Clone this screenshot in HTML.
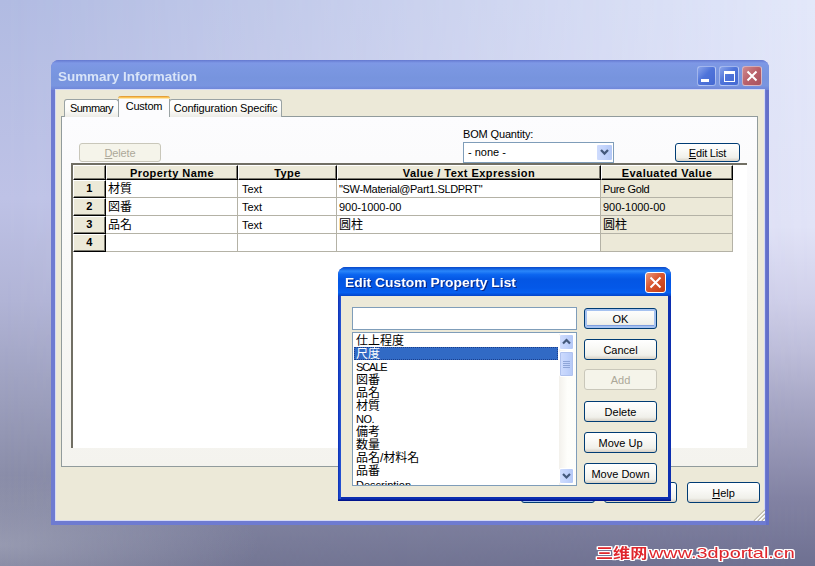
<!DOCTYPE html>
<html lang="ja">
<head>
<meta charset="utf-8">
<title>Summary Information</title>
<style>
html,body{margin:0;padding:0;}
body{width:815px;height:566px;overflow:hidden;position:relative;
  font-family:"Liberation Sans","Noto Sans CJK JP",sans-serif;font-size:11px;color:#000;
  background:#b9bcdc;}
.abs{position:absolute;}
#bg,#bg2,#bg3{left:0;top:0;width:815px;height:566px;}
#bg{background:linear-gradient(to bottom, rgb(177,187,226) 0%, rgb(190,194,230) 35%, rgb(177,180,214) 53%, rgb(155,158,188) 71%, rgb(133,136,163) 88%, rgb(118,121,149) 100%);}
#bg2{background:linear-gradient(to bottom, rgb(227,232,250) 0%, rgb(225,227,247) 40%, rgb(208,208,234) 53%, rgb(190,190,218) 62%, rgb(168,168,198) 71%, rgb(130,130,163) 88%, rgb(110,112,145) 100%);
  -webkit-mask-image:linear-gradient(to right, rgba(0,0,0,0) 0%, rgba(0,0,0,1) 100%);mask-image:linear-gradient(to right, rgba(0,0,0,0) 0%, rgba(0,0,0,1) 100%);}
#bg3{background:radial-gradient(ellipse 260px 70px at 0px 545px, rgba(185,188,205,0.45) 0%, rgba(185,188,205,0) 100%);}
/* main window */
#win{left:51px;top:60px;width:717.6px;height:464.5px;border-radius:8px 8px 0 0;background:#6e7bd1;overflow:hidden;}
#win .title{left:0;top:0;width:718px;height:30px;
  background:linear-gradient(to bottom,#6478d0 0%,#7e98e6 10%,#7b97e2 25%,#7794de 60%,#7995e0 85%,#6e84d8 100%);}
#win .ttext{left:7px;top:10px;font-weight:bold;font-size:12px;line-height:14px;color:#d8e4f8;white-space:nowrap;transform:scaleX(1.12);transform-origin:left center;}
#win .client{left:5px;top:30px;width:708px;height:430px;background:#ece9d8;box-shadow:0 0 0 1px #d4d9f6;}
.cap{top:6px;width:19.8px;height:20px;border:1px solid rgba(235,240,255,0.55);border-radius:3px;box-sizing:border-box;}
.capb{background:linear-gradient(135deg,#8aa4ea 0%,#4f74da 45%,#4468d2 100%);}
.capr{background:linear-gradient(135deg,#cf8a8e 0%,#b9606a 50%,#a9525e 100%);}
/* tabs */
.tab{box-sizing:border-box;border:1px solid #9aa3a4;border-bottom:none;border-radius:3px 3px 0 0;
  background:linear-gradient(to bottom,#ffffff 0%,#fbfbf8 60%,#ecebe6 100%);text-align:center;white-space:nowrap;}
.tabsel{background:#fcfcfe;border-top:none;}
.tabsel:before{content:"";position:absolute;left:-1px;top:0;right:-1px;height:3px;border-radius:3px 3px 0 0;
  background:linear-gradient(to bottom,#e5a03a 0%,#e5a03a 33%,#fbc457 34%,#fbc457 66%,#fde6ae 67%,#fde6ae 100%);}
#panel{left:61px;top:116px;width:697px;height:351px;box-sizing:border-box;border:1px solid #919b9c;
  background:linear-gradient(to bottom,#fcfcfe 0%,#f8f8f6 50%,#f4f3ee 100%);}
/* xp buttons */
.btn{box-sizing:border-box;border:1px solid #003c74;border-radius:3px;text-align:center;white-space:nowrap;
  background:linear-gradient(to bottom,#ffffff 0%,#f9f9f6 40%,#f0f0ea 80%,#d6d0c5 100%);line-height:20px;}
.btn.dis{border-color:#c9c7ba;color:#aca899;background:#f5f4ea;}
.btn.def{box-shadow:inset 0 0 0 2px #a6c2f0, inset 0 -1px 0 2px #7f9fe0;}
u{text-decoration:underline;}
/* grid */
#grid{left:71px;top:163px;width:676px;height:285px;background:#fff;box-sizing:border-box;
  border-left:2px solid #716f64;border-top:2px solid #716f64;}
.hd{box-sizing:border-box;background:#ece9d8;border-right:1px solid #000;border-bottom:1px solid #000;
  border-left:1px solid #fff;border-top:1px solid #fff;box-shadow:inset -1px -1px 0 #7d7b70;font-weight:bold;font-size:11px;letter-spacing:0.45px;text-align:center;white-space:nowrap;line-height:14px;}
.cell{box-sizing:border-box;border-right:1px solid #b4b2a6;border-bottom:1px solid #b4b2a6;white-space:nowrap;line-height:18px;padding-left:2px;}
.ev{background:#ece9d8;}
.jp{font-size:12px;font-family:"Liberation Sans","Noto Sans CJK JP",sans-serif;}
/* edit dialog */
#dlg{left:338px;top:267px;width:333px;height:234px;border-radius:8px 8px 0 0;background:linear-gradient(to bottom,#0c2eb0 0%,#0c2eb0 99.2%,#00138c 99.6%,#00138c 100%);overflow:hidden;}
#dlg .title{left:0;top:0;width:333px;height:29px;
  background:linear-gradient(to bottom,#0a48c8 0%,#1060e0 6%,#2a86fa 14%,#0c66f0 26%,#0456e4 42%,#0458e8 72%,#0660f0 88%,#0444c8 100%);}
#dlg .ttext{left:7px;top:9px;font-weight:bold;font-size:12px;line-height:14px;color:#fff;white-space:nowrap;text-shadow:1px 1px 0 #0a2a8c;transform:scaleX(1.155);transform-origin:left center;}
#dlg .client{left:3px;top:29px;width:327px;height:201px;background:#ece9d8;}
.inp{box-sizing:border-box;border:1px solid #7f9db9;background:#fff;}
.li{left:1px;width:204px;height:13px;line-height:13px;white-space:nowrap;font-size:12px;padding-left:2px;box-sizing:border-box;}
.li.en{font-size:11px;}
.sbtn{box-sizing:border-box;border:1px solid #fff;border-radius:2px;background:linear-gradient(to right,#cfdcfd 0%,#c2d3fc 50%,#b4c8f6 100%);}
.wm{height:20px;line-height:20px;white-space:nowrap;color:#e0262c;transform-origin:left center;
  font-family:"Liberation Sans","Noto Sans CJK SC",sans-serif;
  text-shadow:-1px -1px 0 #fff,1px -1px 0 #fff,-1px 1px 0 #fff,1px 1px 0 #fff,0 -1px 0 #fff,0 1px 0 #fff,-1px 0 0 #fff,1px 0 0 #fff;}
</style>
</head>
<body>
<div id="bg" class="abs"></div><div id="bg2" class="abs"></div><div id="bg3" class="abs"></div>

<div id="win" class="abs">
  <div class="title abs"></div>
  <div class="ttext abs">Summary Information</div>
  <div class="cap capb abs" style="left:645.5px"><div class="abs" style="left:3.5px;top:12px;width:8px;height:3px;background:#fff"></div></div>
  <div class="cap capb abs" style="left:668.2px"><div class="abs" style="left:3.5px;top:4px;width:11px;height:11px;box-sizing:border-box;border:1px solid #fff;border-top-width:3px"></div></div>
  <div class="cap capr abs" style="left:691.2px">
    <svg class="abs" style="left:0;top:0" width="18" height="18" viewBox="0 0 18 18"><path d="M4.5 4.5 L13.5 13.5 M13.5 4.5 L4.5 13.5" stroke="#fff" stroke-width="2" fill="none"/></svg>
  </div>
  <div class="abs" style="right:0;top:30px;width:3px;height:435px;background:#6470c9;"></div>
  <div class="client abs"></div>
</div>

<!-- tabs -->
<div id="panel" class="abs"></div>
<div class="tab abs" style="left:64px;top:99px;width:55px;height:18px;line-height:17px;letter-spacing:-0.6px;">Summary</div>
<div class="tab abs" style="left:169px;top:99px;width:113px;height:18px;line-height:17px;letter-spacing:-0.15px;">Configuration Specific</div>
<div class="tab tabsel abs" style="left:118px;top:96px;width:52px;height:21px;line-height:20px;letter-spacing:-0.25px;">Custom</div>

<div class="btn dis abs" style="left:79px;top:143px;width:82px;height:19px;line-height:18px;letter-spacing:-0.15px;"><u>D</u>elete</div>
<div class="abs" style="left:463px;top:128px;white-space:nowrap;letter-spacing:-0.15px;">BOM Quantity:</div>
<div class="inp abs" style="left:463px;top:142px;width:151px;height:21px;">
  <div class="abs" style="left:4px;top:3px;white-space:nowrap;">- none -</div>
  <div class="sbtn abs" style="left:132px;top:1px;width:17px;height:17px;">
    <svg class="abs" style="left:3px;top:4px" width="9" height="7" viewBox="0 0 9 7"><path d="M1 1 L4.5 4.5 L8 1" stroke="#44597c" stroke-width="2.3" fill="none"/></svg>
  </div>
</div>
<div class="btn abs" style="left:675px;top:143px;width:65px;height:19px;line-height:18px;letter-spacing:-0.2px;"><u>E</u>dit List</div>

<!-- grid -->
<div id="grid" class="abs">
  <div class="hd abs" style="left:0;top:0;width:33px;height:15px;"></div>
  <div class="hd abs" style="left:33px;top:0;width:132px;height:15px;">Property Name</div>
  <div class="hd abs" style="left:165px;top:0;width:99px;height:15px;">Type</div>
  <div class="hd abs" style="left:264px;top:0;width:264px;height:15px;">Value / Text Expression</div>
  <div class="hd abs" style="left:528px;top:0;width:132px;height:15px;">Evaluated Value</div>

  <div class="hd abs" style="left:0;top:15px;width:33px;height:18px;line-height:14px;">1</div>
  <div class="hd abs" style="left:0;top:33px;width:33px;height:18px;line-height:14px;">2</div>
  <div class="hd abs" style="left:0;top:51px;width:33px;height:18px;line-height:14px;">3</div>
  <div class="hd abs" style="left:0;top:69px;width:33px;height:18px;line-height:14px;">4</div>

  <div class="cell jp abs" style="left:33px;top:15px;width:132px;height:18px;">材質</div>
  <div class="cell abs" style="left:165px;top:15px;width:99px;height:18px;padding-left:4px;">Text</div>
  <div class="cell abs" style="left:264px;top:15px;width:264px;height:18px;letter-spacing:-0.33px;">"SW-Material@Part1.SLDPRT"</div>
  <div class="cell ev abs" style="left:528px;top:15px;width:132px;height:18px;letter-spacing:-0.35px;">Pure Gold</div>

  <div class="cell jp abs" style="left:33px;top:33px;width:132px;height:18px;">図番</div>
  <div class="cell abs" style="left:165px;top:33px;width:99px;height:18px;padding-left:4px;">Text</div>
  <div class="cell abs" style="left:264px;top:33px;width:264px;height:18px;">900-1000-00</div>
  <div class="cell ev abs" style="left:528px;top:33px;width:132px;height:18px;">900-1000-00</div>

  <div class="cell jp abs" style="left:33px;top:51px;width:132px;height:18px;">品名</div>
  <div class="cell abs" style="left:165px;top:51px;width:99px;height:18px;padding-left:4px;">Text</div>
  <div class="cell jp abs" style="left:264px;top:51px;width:264px;height:18px;">圆柱</div>
  <div class="cell ev jp abs" style="left:528px;top:51px;width:132px;height:18px;">圆柱</div>

  <div class="cell abs" style="left:33px;top:69px;width:132px;height:18px;"></div>
  <div class="cell abs" style="left:165px;top:69px;width:99px;height:18px;"></div>
  <div class="cell abs" style="left:264px;top:69px;width:264px;height:18px;"></div>
  <div class="cell ev abs" style="left:528px;top:69px;width:132px;height:18px;"></div>
</div>

<!-- bottom buttons of main window -->
<div class="btn def abs" style="left:521px;top:482px;width:74px;height:21px;">OK</div>
<div class="btn abs" style="left:604px;top:482px;width:73px;height:21px;">Cancel</div>
<div class="btn abs" style="left:687px;top:482px;width:73px;height:21px;"><u>H</u>elp</div>
<svg class="abs" style="left:753px;top:509px" width="12" height="12" viewBox="0 0 12 12">
  <path d="M12 1 L1 12 M12 5 L5 12 M12 9 L9 12" stroke="#b8b4a2" stroke-width="1.5" fill="none"/>
  <path d="M12 2.4 L2.4 12 M12 6.4 L6.4 12 M12 10.4 L10.4 12" stroke="#fff" stroke-width="1.2" fill="none"/>
</svg>

<!-- edit dialog -->
<div id="dlg" class="abs">
  <div class="abs" style="left:0;top:29px;width:3px;height:203px;background:linear-gradient(to right,#0c2fb4 0%,#1a48cc 60%,#2a56d4 100%);"></div>
  <div class="title abs"></div>
  <div class="ttext abs">Edit Custom Property List</div>
  <div class="abs" style="left:307px;top:5px;width:21px;height:21px;box-sizing:border-box;border:1px solid #fff;border-radius:3px;background:linear-gradient(135deg,#ea9a80 0%,#d9562e 45%,#c13c14 100%);">
    <svg class="abs" style="left:0;top:0" width="19" height="19" viewBox="0 0 19 19"><path d="M4.5 4.5 L14.5 14.5 M14.5 4.5 L4.5 14.5" stroke="#fff" stroke-width="2" fill="none"/></svg>
  </div>
  <div class="client abs">
    <div class="inp abs" style="left:11px;top:11px;width:225px;height:23px;"></div>
    <div class="inp abs" style="left:11px;top:36px;width:225px;height:154px;overflow:hidden;">
      <div class="li abs" style="top:2px;">仕上程度</div>
      <div class="li abs" style="top:14px;line-height:15px;background:#316ac5;color:#fff;outline:1px dotted #1b3f8c;outline-offset:-1px;">尺度</div>
      <div class="li en abs" style="top:28px;letter-spacing:-1.1px;">SCALE</div>
      <div class="li abs" style="top:41px;">図番</div>
      <div class="li abs" style="top:54px;">品名</div>
      <div class="li abs" style="top:67px;">材質</div>
      <div class="li en abs" style="top:80px;letter-spacing:-0.5px;">NO.</div>
      <div class="li abs" style="top:93px;">備考</div>
      <div class="li abs" style="top:106px;">数量</div>
      <div class="li abs" style="top:119px;">品名/材料名</div>
      <div class="li abs" style="top:132px;">品番</div>
      <div class="li en abs" style="top:146px;">Description</div>
      <div class="abs" style="left:206px;top:1px;width:17px;height:151px;background:linear-gradient(to right,#f3f1ec 0%,#fefefb 50%,#fdfdfa 100%);"></div>
      <div class="sbtn abs" style="left:206px;top:1px;width:15px;height:16px;">
        <svg class="abs" style="left:2px;top:3px" width="9" height="7" viewBox="0 0 9 7"><path d="M1 5.5 L4.5 2 L8 5.5" stroke="#44597c" stroke-width="2.2" fill="none"/></svg>
      </div>
      <div class="sbtn abs" style="left:206px;top:18px;width:15px;height:26px;box-shadow:inset 0 0 0 1px #b0c2ee;">
        <div class="abs" style="left:3px;top:9px;width:7px;height:1px;background:#8fa6d8;box-shadow:0 2px 0 #8fa6d8,0 4px 0 #8fa6d8,0 6px 0 #8fa6d8;"></div>
      </div>
      <div class="sbtn abs" style="left:206px;top:135px;width:15px;height:16px;">
        <svg class="abs" style="left:2px;top:4px" width="9" height="7" viewBox="0 0 9 7"><path d="M1 1 L4.5 4.5 L8 1" stroke="#44597c" stroke-width="2.2" fill="none"/></svg>
      </div>
    </div>
    <div class="btn def abs" style="left:243px;top:12px;width:73px;height:21px;">OK</div>
    <div class="btn abs" style="left:243px;top:42.5px;width:73px;height:21px;">Cancel</div>
    <div class="btn dis abs" style="left:243px;top:73px;width:73px;height:21px;">Add</div>
    <div class="btn abs" style="left:243px;top:105px;width:73px;height:21px;">Delete</div>
    <div class="btn abs" style="left:243px;top:136px;width:73px;height:21px;">Move Up</div>
    <div class="btn abs" style="left:243px;top:167px;width:73px;height:21px;">Move Down</div>
  </div>
</div>

<!-- watermark -->
<div class="abs wm" style="left:596px;top:543px;font-size:14px;font-weight:bold;transform:scaleX(1.22);">三维网</div>
<div class="abs wm" style="left:649px;top:543px;font-size:15px;transform:scaleX(1.325);">www.3dportal.cn</div>
</body>
</html>
